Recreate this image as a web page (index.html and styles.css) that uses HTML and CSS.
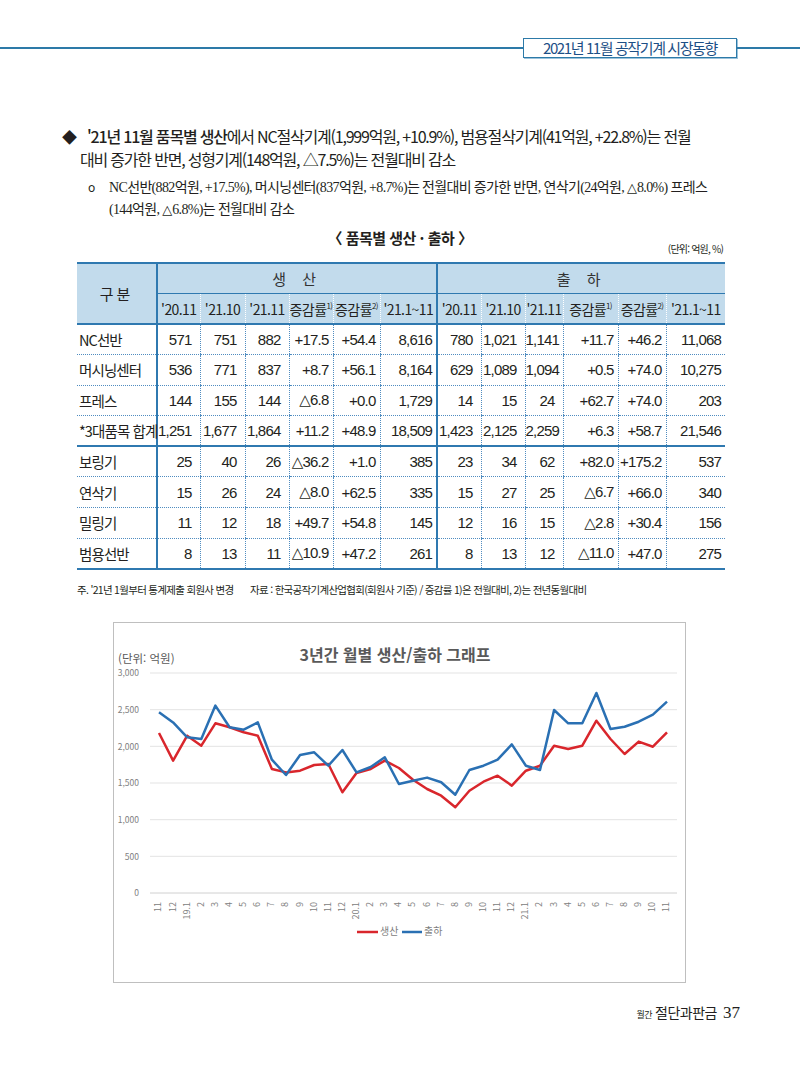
FILE: index.html
```html
<!DOCTYPE html>
<html lang="ko">
<head>
<meta charset="utf-8">
<title>2021년 11월 공작기계 시장동향</title>
<link rel="stylesheet" href="styles.css">
</head>
<body>
<div class="page">
  <header class="running-head">
    <span class="rule rule-left"></span>
    <span class="head-box">2021년 11월 공작기계 시장동향</span>
    <span class="rule rule-right"></span>
  </header>

  <section class="summary">
    <p class="lead"><span class="diamond">◆</span><span class="strong">'21년 11월 품목별 생산</span>에서 NC절삭기계(1,999억원, +10.9%), 범용절삭기계(41억원, +22.8%)는 전월<br>대비 증가한 반면, 성형기계(148억원, △7.5%)는 전월대비 감소</p>
    <p class="sub"><span class="ring">o</span>NC선반(882억원, +17.5%), 머시닝센터(837억원, +8.7%)는 전월대비 증가한 반면, 연삭기(24억원, <span class="tri">△</span>8.0%) 프레스<br>(144억원, <span class="tri">△</span>6.8%)는 전월대비 감소</p>
  </section>

  <div class="caption">〈 품목별 생산 · 출하 〉</div>
  <div class="unit">(단위: 억원, %)</div>

  <table class="stats">
    <colgroup>
      <col class="c-name">
      <col style="width:43px"><col style="width:45px"><col style="width:44px"><col style="width:44px"><col style="width:47px"><col style="width:57px">
      <col style="width:44px"><col style="width:44px"><col style="width:38px"><col style="width:55px"><col style="width:48px"><col style="width:59px">
    </colgroup>
    <thead>
      <tr class="h1">
        <th rowspan="2" class="name-head">구분</th>
        <th colspan="6" class="group">생 산</th>
        <th colspan="6" class="group g-ship">출 하</th>
      </tr>
      <tr class="h2">
        <th>'20.11</th><th>'21.10</th><th>'21.11</th><th>증감률<sup>1)</sup></th><th>증감률<sup>2)</sup></th><th class="end">'21.1~11</th>
        <th>'20.11</th><th>'21.10</th><th>'21.11</th><th>증감률<sup>1)</sup></th><th>증감률<sup>2)</sup></th><th>'21.1~11</th>
      </tr>
    </thead>
    <tbody>
      <tr><th>NC선반</th><td class="w">571</td><td class="w">751</td><td class="w">882</td><td>+17.5</td><td>+54.4</td><td class="end">8,616</td><td class="w">780</td><td class="w">1,021</td><td class="w">1,141</td><td>+11.7</td><td>+46.2</td><td>11,068</td></tr>
      <tr><th>머시닝센터</th><td class="w">536</td><td class="w">771</td><td class="w">837</td><td>+8.7</td><td>+56.1</td><td class="end">8,164</td><td class="w">629</td><td class="w">1,089</td><td class="w">1,094</td><td>+0.5</td><td>+74.0</td><td>10,275</td></tr>
      <tr><th>프레스</th><td class="w">144</td><td class="w">155</td><td class="w">144</td><td>△6.8</td><td>+0.0</td><td class="end">1,729</td><td class="w">14</td><td class="w">15</td><td class="w">24</td><td>+62.7</td><td>+74.0</td><td>203</td></tr>
      <tr class="total"><th>*3대품목 합계</th><td class="w">1,251</td><td class="w">1,677</td><td class="w">1,864</td><td>+11.2</td><td>+48.9</td><td class="end">18,509</td><td class="w">1,423</td><td class="w">2,125</td><td class="w">2,259</td><td>+6.3</td><td>+58.7</td><td>21,546</td></tr>
      <tr><th>보링기</th><td class="w">25</td><td class="w">40</td><td class="w">26</td><td>△36.2</td><td>+1.0</td><td class="end">385</td><td class="w">23</td><td class="w">34</td><td class="w">62</td><td>+82.0</td><td>+175.2</td><td>537</td></tr>
      <tr><th>연삭기</th><td class="w">15</td><td class="w">26</td><td class="w">24</td><td>△8.0</td><td>+62.5</td><td class="end">335</td><td class="w">15</td><td class="w">27</td><td class="w">25</td><td>△6.7</td><td>+66.0</td><td>340</td></tr>
      <tr><th>밀링기</th><td class="w">11</td><td class="w">12</td><td class="w">18</td><td>+49.7</td><td>+54.8</td><td class="end">145</td><td class="w">12</td><td class="w">16</td><td class="w">15</td><td>△2.8</td><td>+30.4</td><td>156</td></tr>
      <tr><th>범용선반</th><td class="w">8</td><td class="w">13</td><td class="w">11</td><td>△10.9</td><td>+47.2</td><td class="end">261</td><td class="w">8</td><td class="w">13</td><td class="w">12</td><td>△11.0</td><td>+47.0</td><td>275</td></tr>
    </tbody>
  </table>

  <p class="note"><span class="note-a">주. '21년 1월부터 통계제출 회원사 변경</span><span>자료 : 한국공작기계산업협회(회원사 기준) / 증감률 1)은 전월대비, 2)는 전년동월대비</span></p>

  <figure class="chart">
    <svg class="chart-svg" width="571" height="359" viewBox="0 0 571 359" xmlns="http://www.w3.org/2000/svg">
      <text class="c-title" x="281" y="34">3년간 월별 생산/출하 그래프</text>
      <text class="c-unit" x="4" y="37">(단위: 억원)</text>
      <g class="grid">
        <line x1="36" y1="50" x2="563" y2="50"/>
        <line x1="36" y1="86.7" x2="563" y2="86.7"/>
        <line x1="36" y1="123.3" x2="563" y2="123.3"/>
        <line x1="36" y1="160" x2="563" y2="160"/>
        <line x1="36" y1="196.7" x2="563" y2="196.7"/>
        <line x1="36" y1="233.3" x2="563" y2="233.3"/>
        <line x1="36" y1="270" x2="563" y2="270" class="axis"/>
      </g>
      <g class="ylab">
        <text x="25" y="51">3,000</text>
        <text x="25" y="87.7">2,500</text>
        <text x="25" y="124.3">2,000</text>
        <text x="25" y="161">1,500</text>
        <text x="25" y="197.7">1,000</text>
        <text x="25" y="234.3">500</text>
        <text x="25" y="271">0</text>
      </g>
      <polyline class="s-prod" points="45,110 59.1,137.6 73.2,112.7 87.3,122.7 101.4,100.3 115.6,104.3 129.7,109.3 143.8,112.7 157.9,146 172,149.4 186.1,147.7 200.2,142 214.3,141 228.4,169.3 242.5,150 256.7,146 270.8,137.6 284.9,145 299,156.7 313.1,166 327.2,172.7 341.3,184.3 355.4,167.7 369.5,158.7 383.6,152.7 397.8,162.6 411.9,147.7 426,142.7 440.1,122.7 454.2,126 468.3,122.7 482.4,97.7 496.5,116 510.6,131 524.7,118.6 538.9,123.7 553,109.3"/>
      <polyline class="s-ship" points="45,89.3 59.1,99.4 73.2,114.3 87.3,116 101.4,82.6 115.6,104.3 129.7,106.7 143.8,99.4 157.9,136.7 172,152 186.1,132 200.2,129.3 214.3,142.7 228.4,127 242.5,149.4 256.7,144 270.8,134.3 284.9,161 299,157.7 313.1,154.6 327.2,159.3 341.3,171.7 355.4,147 369.5,142.7 383.6,136.7 397.8,121.4 411.9,142.7 426,147 440.1,87 454.2,100.3 468.3,100.3 482.4,70 496.5,106 510.6,103.7 524.7,98.7 538.9,91.7 553,78.7"/>
      <g class="xlab">
        <text transform="translate(45 279) rotate(-90)">11</text>
        <text transform="translate(59.1 279) rotate(-90)">12</text>
        <text transform="translate(73.2 279) rotate(-90)">19.1</text>
        <text transform="translate(87.3 279) rotate(-90)">2</text>
        <text transform="translate(101.4 279) rotate(-90)">3</text>
        <text transform="translate(115.6 279) rotate(-90)">4</text>
        <text transform="translate(129.7 279) rotate(-90)">5</text>
        <text transform="translate(143.8 279) rotate(-90)">6</text>
        <text transform="translate(157.9 279) rotate(-90)">7</text>
        <text transform="translate(172 279) rotate(-90)">8</text>
        <text transform="translate(186.1 279) rotate(-90)">9</text>
        <text transform="translate(200.2 279) rotate(-90)">10</text>
        <text transform="translate(214.3 279) rotate(-90)">11</text>
        <text transform="translate(228.4 279) rotate(-90)">12</text>
        <text transform="translate(242.5 279) rotate(-90)">20.1</text>
        <text transform="translate(256.7 279) rotate(-90)">2</text>
        <text transform="translate(270.8 279) rotate(-90)">3</text>
        <text transform="translate(284.9 279) rotate(-90)">4</text>
        <text transform="translate(299 279) rotate(-90)">5</text>
        <text transform="translate(313.1 279) rotate(-90)">6</text>
        <text transform="translate(327.2 279) rotate(-90)">7</text>
        <text transform="translate(341.3 279) rotate(-90)">8</text>
        <text transform="translate(355.4 279) rotate(-90)">9</text>
        <text transform="translate(369.5 279) rotate(-90)">10</text>
        <text transform="translate(383.6 279) rotate(-90)">11</text>
        <text transform="translate(397.8 279) rotate(-90)">12</text>
        <text transform="translate(411.9 279) rotate(-90)">21.1</text>
        <text transform="translate(426 279) rotate(-90)">2</text>
        <text transform="translate(440.1 279) rotate(-90)">3</text>
        <text transform="translate(454.2 279) rotate(-90)">4</text>
        <text transform="translate(468.3 279) rotate(-90)">5</text>
        <text transform="translate(482.4 279) rotate(-90)">6</text>
        <text transform="translate(496.5 279) rotate(-90)">7</text>
        <text transform="translate(510.6 279) rotate(-90)">8</text>
        <text transform="translate(524.7 279) rotate(-90)">9</text>
        <text transform="translate(538.9 279) rotate(-90)">10</text>
        <text transform="translate(553 279) rotate(-90)">11</text>
      </g>
      <g class="legend">
        <line class="s-prod" x1="243" y1="309" x2="264" y2="309"/>
        <text x="266" y="309">생산</text>
        <line class="s-ship" x1="288" y1="309" x2="308" y2="309"/>
        <text x="310" y="309">출하</text>
      </g>
    </svg>
  </figure>

  <footer class="folio"><span class="folio-small">월간</span><span class="folio-title">절단과판금</span><span class="folio-num">37</span></footer>
</div>
</body>
</html>
```

FILE: styles.css
```css
html, body {
  margin: 0;
  padding: 0;
  background: #ffffff;
}

body {
  font-family: "Noto Sans CJK KR", "Noto Sans", sans-serif;
  color: #231f20;
}

.page {
  width: 800px;
  height: 1068px;
  overflow: hidden;
}

/* running head */
.running-head {
  display: flex;
  align-items: center;
  height: 20px;
  margin-top: 38px;
}

.rule {
  height: 2px;
  background: #2d7aa8;
}

.rule-left {
  flex: 1;
}

.rule-right {
  width: 63px;
}

.head-box {
  width: 214px;
  height: 20px;
  box-sizing: border-box;
  border: 1px solid #2d7aa8;
  box-shadow: 1px 1px 0 #9cc3dc;
  text-align: center;
  font-size: 15px;
  line-height: 18px;
  letter-spacing: -1.4px;
  color: #1d4f86;
}

/* summary */
.summary {
  padding-left: 62px;
  padding-right: 40px;
}

.lead {
  margin: 67px 0 0;
  padding-left: 18px;
  text-indent: -18px;
  font-size: 16px;
  line-height: 23px;
  letter-spacing: -1.2px;
  white-space: nowrap;
}

.diamond {
  display: inline-block;
  text-indent: 0;
  width: 25px;
  font-size: 15px;
  letter-spacing: 0;
}

.strong {
  font-weight: 500;
}

.sub {
  margin: 6px 0 0;
  padding-left: 47px;
  text-indent: -21px;
  font-family: "Liberation Serif", "Noto Sans CJK KR", serif;
  font-size: 14px;
  line-height: 22px;
  letter-spacing: -0.65px;
  white-space: nowrap;
}

.sub .tri {
  font-family: "DejaVu Sans", sans-serif;
  font-size: 13px;
  letter-spacing: 0;
}

.ring {
  display: inline-block;
  text-indent: 0;
  width: 21px;
  font-family: "Noto Sans", sans-serif;
  font-size: 12px;
}

/* caption */
.caption {
  margin-top: 7px;
  text-align: center;
  font-size: 15px;
  line-height: 20px;
  font-weight: 700;
  letter-spacing: -0.5px;
}

.unit {
  margin-top: -5px;
  padding-right: 77px;
  text-align: right;
  font-size: 10px;
  line-height: 12px;
  letter-spacing: -0.8px;
}

/* table */
.stats {
  margin: 7px 0 0 77px;
  width: 648px;
  table-layout: fixed;
  border-collapse: collapse;
  border-top: 2px solid #2f79b0;
  border-bottom: 2px solid #2f79b0;
  font-family: "Liberation Sans", "DejaVu Sans", "Noto Sans CJK KR", sans-serif;
  font-size: 15px;
  letter-spacing: -0.8px;
  color: #231f20;
}

.c-name {
  width: 80px;
}

.stats thead th {
  background: #c2dbec;
  font-weight: 400;
  font-family: "Noto Sans CJK KR", sans-serif;
  padding: 0;
}

.stats .h1 th {
  height: 29px;
}

.stats .h1 .group {
  border-bottom: 1px solid #2f79b0;
  letter-spacing: 6px;
  font-size: 15px;
  color: #333333;
}

.stats .h1 .g-ship {
  border-left: 2px solid #2f79b0;
}

.stats .name-head {
  border-right: 2px solid #2f79b0;
  border-bottom: 2px solid #2f79b0;
  font-size: 15px;
  letter-spacing: 3px;
}

.stats .h2 th {
  height: 29px;
  border-bottom: 2px solid #2f79b0;
  border-left: 1px dotted #ffffff;
  font-size: 14px;
  letter-spacing: -0.6px;
  white-space: nowrap;
}

.stats .h2 th:first-child {
  border-left: none;
}

.stats .h2 th.end {
  border-right: 2px solid #2f79b0;
}

.stats sup {
  font-size: 8px;
  vertical-align: 6px;
  line-height: 0;
}

.stats tbody th {
  text-align: left;
  font-weight: 400;
  font-family: "Noto Sans CJK KR", sans-serif;
  font-size: 14.5px;
  letter-spacing: -0.9px;
  padding: 0 0 0 2px;
  border-right: 2px solid #2f79b0;
  white-space: nowrap;
}

.stats tbody tr {
  height: 30.6px;
}

.stats tbody td,
.stats tbody th {
  border-bottom: 1px dotted #4f8cc0;
}

.stats tbody td {
  text-align: right;
  padding: 0 4px 0 0;
  border-left: 1px dotted #4f8cc0;
  white-space: nowrap;
}

.stats tbody td.w {
  padding-right: 8px;
}

.stats tbody td.end {
  border-right: 2px solid #2f79b0;
}

.stats tbody th + td {
  border-left: none;
}

.stats tbody td.end + td {
  border-left: none;
}

.stats tbody tr.total td,
.stats tbody tr.total th {
  border-bottom: 2px solid #2f79b0;
}

.stats tbody tr:last-child td,
.stats tbody tr:last-child th {
  border-bottom: none;
}

/* note */
.note {
  margin: 13px 0 0 77px;
  font-size: 10.5px;
  line-height: 14px;
  letter-spacing: -0.7px;
  white-space: nowrap;
}

.note-a {
  display: inline-block;
  width: 173px;
}

/* chart */
.chart {
  margin: 25px 0 0 113px;
  width: 573px;
  height: 361px;
  box-sizing: border-box;
  border: 1px solid #bfbfbf;
}

.chart-svg {
  display: block;
  font-family: "Noto Sans CJK KR", sans-serif;
}

.c-title {
  font-size: 16px;
  font-weight: 700;
  fill: #595959;
  text-anchor: middle;
  dominant-baseline: middle;
}

.c-unit {
  font-size: 11.5px;
  fill: #595959;
  dominant-baseline: middle;
}

.grid line {
  stroke: #e3e3e3;
  stroke-width: 1;
}

.grid line.axis {
  stroke: #d0d0d0;
}

.ylab text {
  font-size: 8.5px;
  fill: #808080;
  text-anchor: end;
  dominant-baseline: middle;
}

.xlab text {
  font-size: 9px;
  fill: #808080;
  text-anchor: end;
  dominant-baseline: middle;
}

.s-prod {
  fill: none;
  stroke: #d9262c;
  stroke-width: 2.5;
  stroke-linejoin: round;
}

.s-ship {
  fill: none;
  stroke: #2a70b3;
  stroke-width: 2.5;
  stroke-linejoin: round;
}

.legend text {
  font-size: 10px;
  fill: #808080;
  dominant-baseline: middle;
}

/* folio */
.folio {
  margin-top: 19px;
  padding-right: 60px;
  display: flex;
  justify-content: flex-end;
  align-items: baseline;
  line-height: 20px;
}

.folio-small {
  font-size: 9px;
  letter-spacing: -0.5px;
  margin-right: 3px;
}

.folio-title {
  font-size: 14px;
  letter-spacing: -0.5px;
  margin-right: 6px;
}

.folio-num {
  font-family: "Liberation Serif", serif;
  font-size: 17px;
}
```
